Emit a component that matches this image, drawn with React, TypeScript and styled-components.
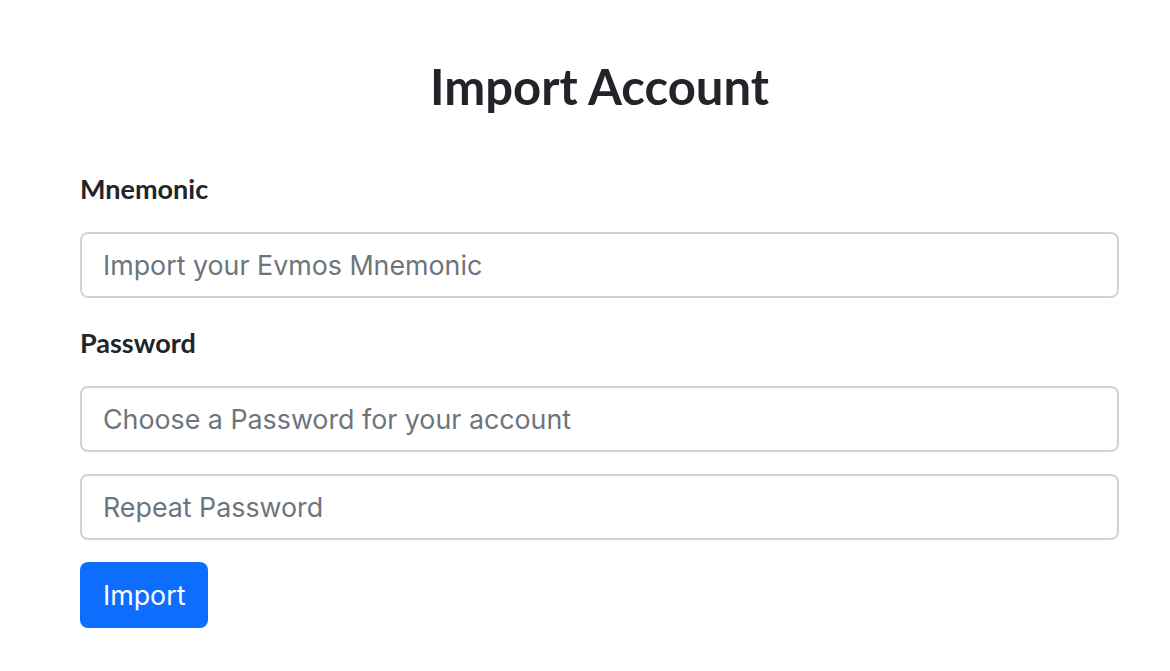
import styled, { createGlobalStyle } from "styled-components";

const GlobalStyle = createGlobalStyle`
  html, body {
    margin: 0;
    padding: 0;
    background: #ffffff;
  }
  body {
    font-family: "Inter", "Liberation Sans", Arial, sans-serif;
    color: #212529;
  }
`;

const Page = styled.div`
  width: 1039px;
  margin-left: 80px;
  padding-top: 58px;
`;

const Title = styled.h1`
  margin: 0;
  text-align: center;
  font-family: "Lato", "Open Sans", sans-serif;
  font-weight: 700;
  font-size: 49px;
  line-height: 56px;
  color: #212529;
`;

const Form = styled.form`
  display: flex;
  flex-direction: column;
  margin-top: 60px;
`;

const Label = styled.label`
  display: block;
  font-family: "Lato", "Open Sans", sans-serif;
  font-weight: 700;
  font-size: 27px;
  line-height: 30px;
  color: #212529;
  margin-bottom: 28px;
`;

const Field = styled.div<{ $gap: number }>`
  margin-bottom: ${(p) => p.$gap}px;
`;

const Input = styled.input`
  box-sizing: border-box;
  display: block;
  width: 100%;
  height: 66px;
  padding: 0 21px;
  border: 2px solid #ced4da;
  border-radius: 8px;
  background: #ffffff;
  font-family: "Inter", "Liberation Sans", Arial, sans-serif;
  font-size: 26.8px;
  color: #212529;
  outline: none;
  &::placeholder {
    color: #6c757d;
    opacity: 1;
  }
`;

const Button = styled.button`
  align-self: flex-start;
  box-sizing: border-box;
  height: 66px;
  padding: 0 23px;
  border: none;
  border-radius: 8px;
  background: #0d6efd;
  color: #ffffff;
  font-family: "Inter", "Liberation Sans", Arial, sans-serif;
  font-size: 26.8px;
  cursor: pointer;
`;

export default function App() {
  return (
    <>
      <GlobalStyle />
      <Page>
        <Title>Import Account</Title>
        <Form onSubmit={(e) => e.preventDefault()}>
          <Label>Mnemonic</Label>
          <Field $gap={30}>
            <Input placeholder="Import your Evmos Mnemonic" />
          </Field>
          <Label>Password</Label>
          <Field $gap={22}>
            <Input type="password" placeholder="Choose a Password for your account" />
          </Field>
          <Field $gap={22}>
            <Input type="password" placeholder="Repeat Password" />
          </Field>
          <Button type="submit">Import</Button>
        </Form>
      </Page>
    </>
  );
}
